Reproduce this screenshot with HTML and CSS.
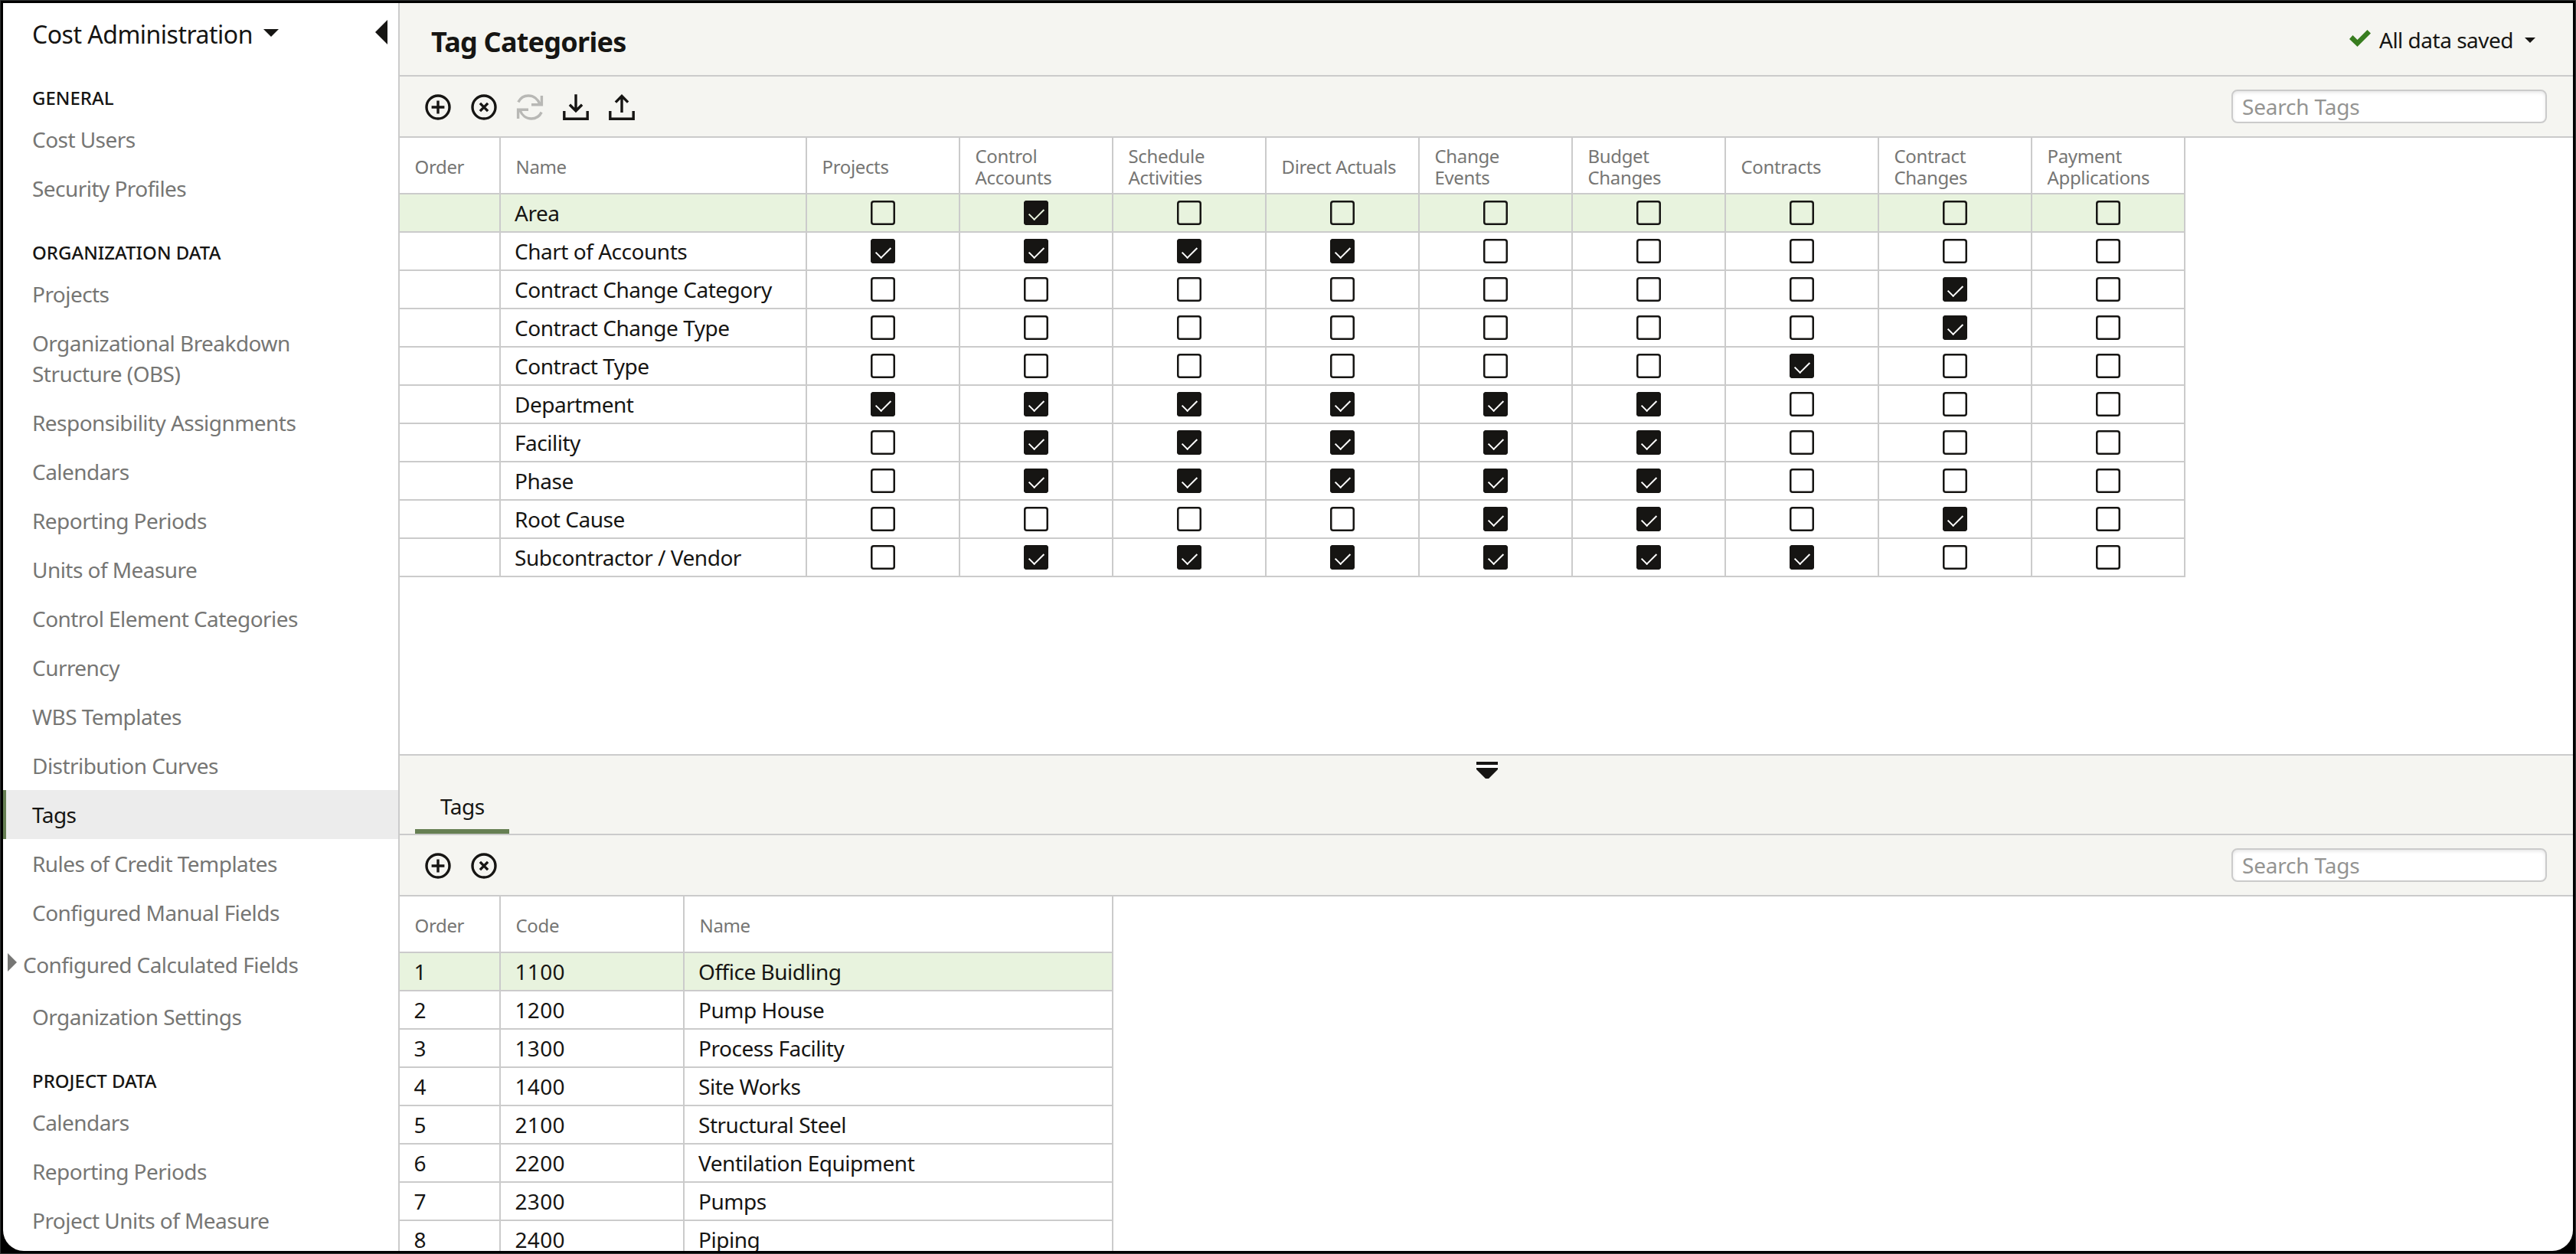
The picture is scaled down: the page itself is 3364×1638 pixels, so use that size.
FILE: index.html
```html
<!DOCTYPE html>
<html lang="en">
<head>
<meta charset="utf-8">
<title>Tag Categories</title>
<link rel="stylesheet" href="styles.css">
</head>
<body>
<svg class="defs" width="0" height="0">
  <symbol id="add" viewBox="0 0 36 36"><g fill="none" stroke="currentColor" stroke-width="3.4"><circle cx="18" cy="18" r="15"/><path d="M18 9.6v16.8M9.6 18h16.8"/></g></symbol>
  <symbol id="remove" viewBox="0 0 36 36"><g fill="none" stroke="currentColor" stroke-width="3.4"><circle cx="18" cy="18" r="15"/><path d="M12.9 12.9l10.2 10.2M23.1 12.9L12.9 23.1"/></g></symbol>
  <symbol id="refresh" viewBox="0 0 36 36"><g fill="none" stroke="currentColor" stroke-width="3.4"><path d="M2.8 11.4C5.5 6.2 10.2 3 16 3c7 0 12.5 4.500 15 11M33.4 3v11.7H20M33.2 24.6C30.5 29.8 25.8 33 20 33 13 33 7.5 28.5 5 22M2.6 33V21.3H16"/></g></symbol>
  <symbol id="download" viewBox="0 0 36 36"><g fill="none" stroke="currentColor" stroke-width="3.4"><path d="M2.8 23v10.2h30.4V23M18 1.300v21.5M9.9 14.7L18 22.8l8.1-8.1"/></g></symbol>
  <symbol id="upload" viewBox="0 0 36 36"><g fill="none" stroke="currentColor" stroke-width="3.4"><path d="M2.8 23v10.2h30.4V23M18 25V3.5M9.9 11.6L18 3.5l8.1 8.1"/></g></symbol>
</svg>
<div class="window">
  <nav class="sidebar">
    <header class="side-head">
      <span>Cost Administration</span>
      <svg class="caret" viewBox="0 0 20 10"><path d="M0 0h20L10 10z"/></svg>
      <svg class="collapse" viewBox="0 0 16 32"><path d="M16 0v32L0 16z"/></svg>
    </header>
    <h2>GENERAL</h2>
    <a>Cost Users</a>
    <a>Security Profiles</a>
    <h2>ORGANIZATION DATA</h2>
    <a>Projects</a>
    <a>Organizational Breakdown<br>Structure (OBS)</a>
    <a>Responsibility Assignments</a>
    <a>Calendars</a>
    <a>Reporting Periods</a>
    <a>Units of Measure</a>
    <a>Control Element Categories</a>
    <a>Currency</a>
    <a>WBS Templates</a>
    <a>Distribution Curves</a>
    <a class="current">Tags</a>
    <a>Rules of Credit Templates</a>
    <a>Configured Manual Fields</a>
    <a class="parent"><svg class="expand" viewBox="0 0 12 24"><path d="M0 0v24l12-12z"/></svg>Configured Calculated Fields</a>
    <a>Organization Settings</a>
    <h2>PROJECT DATA</h2>
    <a>Calendars</a>
    <a>Reporting Periods</a>
    <a>Project Units of Measure</a>
  </nav>
  <main class="main">
    <header class="page-head">
      <h1>Tag Categories</h1>
      <div class="status">
        <svg class="tick" viewBox="0 0 28 22"><path d="M0 12l4.500-5 6 6L23.500 0 28 4.500 10.500 22z"/></svg>
        <span>All data saved</span>
        <svg class="caret small" viewBox="0 0 14 7"><path d="M0 0h14L7 7z"/></svg>
      </div>
    </header>
    <div class="toolbar">
      <div class="tools">
        <svg><use href="#add"/></svg>
        <svg><use href="#remove"/></svg>
        <svg class="disabled"><use href="#refresh"/></svg>
        <svg><use href="#download"/></svg>
        <svg><use href="#upload"/></svg>
      </div>
      <input class="search" type="text" placeholder="Search Tags">
    </div>
    <section class="upper">
      <table class="grid">
        <colgroup><col class="w-order"><col class="w-400"><col class="w-200" span="9"></colgroup>
        <thead><tr><th>Order</th><th>Name</th><th>Projects</th><th>Control<br>Accounts</th><th>Schedule<br>Activities</th><th>Direct Actuals</th><th>Change<br>Events</th><th>Budget<br>Changes</th><th>Contracts</th><th>Contract<br>Changes</th><th>Payment<br>Applications</th></tr></thead>
        <tbody>
          <tr class="selected"><td></td><td>Area</td><td><i></i></td><td><i class="on"></i></td><td><i></i></td><td><i></i></td><td><i></i></td><td><i></i></td><td><i></i></td><td><i></i></td><td><i></i></td></tr>
          <tr><td></td><td>Chart of Accounts</td><td><i class="on"></i></td><td><i class="on"></i></td><td><i class="on"></i></td><td><i class="on"></i></td><td><i></i></td><td><i></i></td><td><i></i></td><td><i></i></td><td><i></i></td></tr>
          <tr><td></td><td>Contract Change Category</td><td><i></i></td><td><i></i></td><td><i></i></td><td><i></i></td><td><i></i></td><td><i></i></td><td><i></i></td><td><i class="on"></i></td><td><i></i></td></tr>
          <tr><td></td><td>Contract Change Type</td><td><i></i></td><td><i></i></td><td><i></i></td><td><i></i></td><td><i></i></td><td><i></i></td><td><i></i></td><td><i class="on"></i></td><td><i></i></td></tr>
          <tr><td></td><td>Contract Type</td><td><i></i></td><td><i></i></td><td><i></i></td><td><i></i></td><td><i></i></td><td><i></i></td><td><i class="on"></i></td><td><i></i></td><td><i></i></td></tr>
          <tr><td></td><td>Department</td><td><i class="on"></i></td><td><i class="on"></i></td><td><i class="on"></i></td><td><i class="on"></i></td><td><i class="on"></i></td><td><i class="on"></i></td><td><i></i></td><td><i></i></td><td><i></i></td></tr>
          <tr><td></td><td>Facility</td><td><i></i></td><td><i class="on"></i></td><td><i class="on"></i></td><td><i class="on"></i></td><td><i class="on"></i></td><td><i class="on"></i></td><td><i></i></td><td><i></i></td><td><i></i></td></tr>
          <tr><td></td><td>Phase</td><td><i></i></td><td><i class="on"></i></td><td><i class="on"></i></td><td><i class="on"></i></td><td><i class="on"></i></td><td><i class="on"></i></td><td><i></i></td><td><i></i></td><td><i></i></td></tr>
          <tr><td></td><td>Root Cause</td><td><i></i></td><td><i></i></td><td><i></i></td><td><i></i></td><td><i class="on"></i></td><td><i class="on"></i></td><td><i></i></td><td><i class="on"></i></td><td><i></i></td></tr>
          <tr><td></td><td>Subcontractor / Vendor</td><td><i></i></td><td><i class="on"></i></td><td><i class="on"></i></td><td><i class="on"></i></td><td><i class="on"></i></td><td><i class="on"></i></td><td><i class="on"></i></td><td><i></i></td><td><i></i></td></tr>
        </tbody>
      </table>
    </section>
    <div class="tabs">
      <svg class="splitter" viewBox="0 0 28 22"><path fill="#fff" d="M0 4h28v4H0z"/><path d="M0 0h28v4H0zM0 8h28v2L16 22h-4L0 10z"/></svg>
      <span class="tab">Tags</span>
    </div>
    <div class="toolbar">
      <div class="tools">
        <svg><use href="#add"/></svg>
        <svg><use href="#remove"/></svg>
      </div>
      <input class="search" type="text" placeholder="Search Tags">
    </div>
    <section class="lower">
      <table class="grid narrow">
        <colgroup><col class="w-order"><col class="w-240"><col class="w-560"></colgroup>
        <thead><tr><th>Order</th><th>Code</th><th>Name</th></tr></thead>
        <tbody>
          <tr class="selected"><td class="num">1</td><td class="num">1100</td><td>Office Buidling</td></tr>
          <tr><td class="num">2</td><td class="num">1200</td><td>Pump House</td></tr>
          <tr><td class="num">3</td><td class="num">1300</td><td>Process Facility</td></tr>
          <tr><td class="num">4</td><td class="num">1400</td><td>Site Works</td></tr>
          <tr><td class="num">5</td><td class="num">2100</td><td>Structural Steel</td></tr>
          <tr><td class="num">6</td><td class="num">2200</td><td>Ventilation Equipment</td></tr>
          <tr><td class="num">7</td><td class="num">2300</td><td>Pumps</td></tr>
          <tr><td class="num">8</td><td class="num">2400</td><td>Piping</td></tr>
        </tbody>
      </table>
    </section>
  </main>
</div>
</body>
</html>
```
FILE: styles.css
```css
* { box-sizing: border-box; }

body {
  margin: 0;
  width: 3364px;
  height: 1638px;
  padding: 3px;
  overflow: hidden;
  background: #000;
  border: 1px solid #303232;
  font: 28px "Noto Sans", "Open Sans", sans-serif;
  letter-spacing: -0.48px;
  color: #161513;
}

svg { display: block; flex: none; fill: currentColor; }
.defs { position: absolute; }

.window {
  display: grid;
  grid-template-columns: 518px 1fr;
  height: 1630px;
  overflow: hidden;
  background: #fff;
  border-radius: 0 0 27px 27px;
}

/* Sidebar */
.sidebar { border-right: 2px solid #cbcbcb; overflow: hidden; }
.side-head {
  display: flex;
  align-items: center;
  height: 72px;
  padding: 8px 14px 0 38px;
  font-size: 32px;
  letter-spacing: -0.5px;
}
.caret { width: 20px; height: 10px; margin: -2px 0 0 14px; }
.caret.small { width: 14px; height: 7px; margin: 0 0 0 15px; }
.collapse { width: 16px; height: 32px; margin: -4px 0 0 auto; }
.sidebar h2 {
  margin: 0;
  height: 74px;
  padding: 41px 0 0 38px;
  font-size: 24px;
  font-weight: 500;
  line-height: 22px;
  letter-spacing: 0;
}
.sidebar a {
  display: block;
  padding: 12px 0 12px 38px;
  line-height: 40px;
  letter-spacing: -0.55px;
  color: #767674;
}
.sidebar .current {
  padding-left: 34px;
  border-left: 4px solid #667f53;
  background: #ececec;
  color: #161513;
}
.sidebar .parent {
  display: flex;
  align-items: center;
  height: 72px;
  padding: 0 0 0 6px;
}
.expand { width: 12px; height: 24px; margin: -6px 8px 0 0; }

/* Main column */
.main { display: flex; flex-direction: column; min-width: 0; overflow: hidden; }
.page-head {
  display: flex;
  align-items: center;
  justify-content: space-between;
  flex: none;
  height: 96px;
  padding: 0 49px 0 41px;
  background: #f5f5f1;
  border-bottom: 2px solid #cbcbcb;
}
h1 {
  margin: 6px 0 0;
  font-size: 36px;
  font-weight: 700;
  letter-spacing: -0.75px;
}
.status { display: flex; align-items: center; margin-top: 2px; }
.status span { letter-spacing: -0.5px; }
.tick { width: 28px; height: 22px; margin: -4px 11px 0 0; color: #387d1f; }

.toolbar {
  display: flex;
  align-items: center;
  justify-content: space-between;
  flex: none;
  height: 80px;
  padding: 0 34px 0 32px;
  background: #f5f5f1;
  border-bottom: 2px solid #cbcbcb;
}
.tools { display: flex; gap: 24px; margin-top: 2px; }
.tools svg { width: 36px; height: 36px; }
.disabled { color: #b8b8b5; }
.search {
  width: 412px;
  height: 44px;
  padding: 0 12px;
  border: 2px solid #cbcbcb;
  border-radius: 8px;
  background: #fff;
  box-shadow: inset 0 2px 4px rgba(0, 0, 0, .1);
  font: inherit;
  letter-spacing: -0.2px;
}
.search::placeholder { color: #949492; }

.upper { flex: none; height: 807px; border-bottom: 2px solid #cbcbcb; }
.lower { flex: 1; min-height: 0; overflow: hidden; }

/* Data grids */
.grid {
  width: 2332px;
  table-layout: fixed;
  border-collapse: separate;
  border-spacing: 0;
}
.narrow { width: 932px; }
.w-order { width: 132px; }
.w-200 { width: 200px; }
.w-240 { width: 240px; }
.w-400 { width: 400px; }
.w-560 { width: 560px; }
.grid th, .grid td {
  padding: 0 0 0 18px;
  border: solid #cbcbcb;
  border-width: 0 2px 2px 0;
  text-align: left;
  white-space: nowrap;
}
.grid th {
  height: 74px;
  padding: 3px 0 0 19.5px;
  font-size: 24px;
  font-weight: 400;
  line-height: 28px;
  letter-spacing: -0.35px;
  color: #767674;
}
.grid td { height: 50px; line-height: 48px; }
.grid .num { padding-left: 18.5px; letter-spacing: 0.35px; }
.selected { background: #e8f3de; color: #161513; }

.grid i {
  display: block;
  width: 32px;
  height: 32px;
  margin-left: 65px;
  padding: 9.5px 0 0 7px;
  border-radius: 4px;
  box-shadow: inset 0 0 0 2.5px #161513;
  color: #fff;
}
.selected i { color: #e8f3de; }
.grid .on { background: #161513; }
.on::after {
  content: "";
  display: block;
  width: 17px;
  height: 9px;
  border: solid currentColor;
  border-width: 0 0 2px 2px;
  transform: rotate(-45deg);
}

/* Lower pane tabs */
.tabs {
  position: relative;
  display: flex;
  align-items: flex-end;
  flex: none;
  height: 104px;
  padding-left: 20px;
  background: #f5f5f1;
  border-bottom: 2px solid #cbcbcb;
}
.tab {
  width: 123px;
  height: 64px;
  padding-left: 33px;
  border-bottom: 6px solid #667f53;
  line-height: 56px;
}
.splitter { position: absolute; left: 1406px; top: 8px; width: 28px; height: 22px; }
```
